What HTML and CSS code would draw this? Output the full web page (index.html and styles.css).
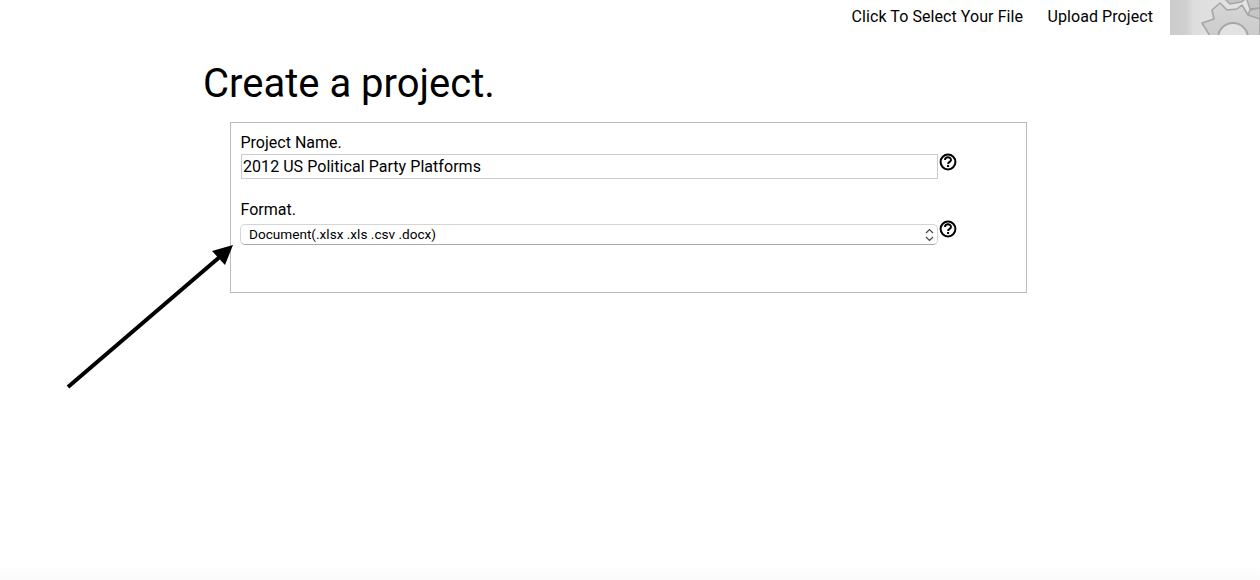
FILE: index.html
```html
<!DOCTYPE html>
<html lang="en">
<head>
    <meta charset="UTF-8">
    <title>Create a project</title>
    <link rel="stylesheet" href="styles.css">
</head>
<body>
    <div class="topbar">
        <a class="nav-link" href="#">Click To Select Your File</a>
        <a class="nav-link" href="#">Upload Project</a>
        <div class="gear-box">
            <svg width="90" height="35" viewBox="0 0 90 35">
                <defs>
                    <linearGradient id="wash" x1="0" y1="0" x2="1" y2="0">
                        <stop offset="0" stop-color="#cbcbcb"></stop>
                        <stop offset="0.18" stop-color="#cfcfcf"></stop>
                        <stop offset="0.26" stop-color="#dedede"></stop>
                        <stop offset="1" stop-color="#e4e4e4"></stop>
                    </linearGradient>
                    <linearGradient id="gearFill" x1="0" y1="0" x2="0" y2="1">
                        <stop offset="0" stop-color="#d6d6d6"></stop>
                        <stop offset="1" stop-color="#cbcbcb"></stop>
                    </linearGradient>
                </defs>
                <rect width="90" height="35" fill="url(#wash)"></rect>
                <!-- back gear, cut off by the top edge -->
                <path d="M56 0 L60 4 L71 2 L77 -2 L77 0 L80 9 L90 8 L90 -2 L56 -2 Z" fill="#c6c6c6" stroke="#a6a6a6" stroke-width="1.5"></path>
                <path d="M78 15 L80 10 L90 8 L90 20 Z" fill="#c6c6c6" stroke="#a6a6a6" stroke-width="1.5"></path>
                <!-- main gear -->
                <path d="M40 36 L32 23 L44 19 L42 10 L50 3 L57 10 L67 9 L72 5 L78 15 L90 19 L90 36 Z" fill="url(#gearFill)" stroke="#a6a6a6" stroke-width="1.6" stroke-linejoin="round"></path>
                <circle cx="63" cy="38" r="15" fill="#e2e2e2" stroke="#a6a6a6" stroke-width="2"></circle>
            </svg>
        </div>
    </div>

    <div class="page">
        <h1 class="title">Create a project.</h1>
        <div class="panel">
            <label class="field-label" for="projectName">Project Name.</label>
            <div class="field-row">
                <input id="projectName" class="text-input" type="text" value="2012 US Political Party Platforms">
                <svg class="help-icon" width="18" height="18" viewBox="0 0 18 18">
                    <circle cx="9" cy="9" r="7.4" fill="none" stroke="#000" stroke-width="2"></circle>
                    <path d="M6 7 C6 3.4 12 3.4 12 6.9 C12 9 9.1 8.8 9.1 11" fill="none" stroke="#000" stroke-width="1.9"></path>
                    <rect x="8.1" y="12" width="2" height="2"></rect>
                </svg>
            </div>
            <label class="field-label format-label" for="format">Format.</label>
            <div class="field-row">
                <div id="format" class="select-box">
                    <span class="select-text">Document(.xlsx .xls .csv .docx)</span>
                    <svg width="9" height="14" viewBox="0 0 9 14">
                        <path d="M1 5 L4.5 1.5 L8 5 M1 9 L4.5 12.5 L8 9" fill="none" stroke="#444" stroke-width="1.2"></path>
                    </svg>
                </div>
                <svg class="help-icon" width="18" height="18" viewBox="0 0 18 18">
                    <circle cx="9" cy="9" r="7.4" fill="none" stroke="#000" stroke-width="2"></circle>
                    <path d="M6 7 C6 3.4 12 3.4 12 6.9 C12 9 9.1 8.8 9.1 11" fill="none" stroke="#000" stroke-width="1.9"></path>
                    <rect x="8.1" y="12" width="2" height="2"></rect>
                </svg>
            </div>
        </div>
    </div>

    <!-- annotation arrow drawn over the page -->
    <svg class="arrow" width="180" height="150" viewBox="60 240 180 150">
        <line x1="68" y1="387" x2="222" y2="255" stroke="#000" stroke-width="4"></line>
        <polygon points="233,245 225,265 212,251" fill="#000"></polygon>
    </svg>
</body>
</html>
```

FILE: styles.css
```css
html, body {
    height: 100%;
}
body {
    margin: 0;
    background: linear-gradient(to bottom, #fff 565px, #fafafa 580px);
    font-family: Roboto, sans-serif;
    color: #000;
    overflow: hidden;
}
.topbar {
    display: flex;
    justify-content: flex-end;
    align-items: center;
    height: 33px;
    padding-bottom: 2px;
}
.nav-link {
    color: #000;
    text-decoration: none;
    font-size: 16px;
    letter-spacing: 0.07px;
    margin-right: 24.5px;
}
.nav-link:nth-child(2) {
    margin-right: 17px;
}
.gear-box {
    width: 90px;
    height: 35px;
    margin-bottom: -2px;
}
.gear-box svg {
    display: block;
}
.page {
    padding-left: 203px;
}
.title {
    margin: 24px 0 0;
    font-size: 40px;
    font-weight: 400;
    line-height: 50px;
}
.panel {
    box-sizing: border-box;
    width: 797px;
    height: 171px;
    margin: 13px 0 0 27px;
    padding: 10px 10px 0 9.5px;
    border: 1px solid #bbb;
}
.field-label {
    display: block;
    font-size: 16px;
    line-height: 20px;
}
.format-label {
    margin-top: 21px;
}
.field-row {
    display: flex;
    align-items: flex-start;
    margin-top: 1px;
}
.text-input {
    box-sizing: border-box;
    width: 697px;
    height: 25px;
    margin-left: 0.5px;
    padding: 0 1px;
    border: 1px solid #ccc;
    font-family: Roboto, sans-serif;
    font-size: 16px;
    letter-spacing: 0.05px;
    color: #000;
    outline: none;
}
.select-box {
    box-sizing: border-box;
    display: flex;
    justify-content: space-between;
    align-items: center;
    width: 698px;
    height: 21px;
    margin: 3px 0 0 -0.5px;
    padding: 0 3px 0 8px;
    border: 1px solid #d4d4d4;
    border-bottom-color: #aaa;
    border-radius: 5px;
    font-size: 13.6px;
}
.select-text {
    margin-bottom: 2px;
}
.help-icon {
    margin: -1px 0 0 1px;
    flex: none;
}
.arrow {
    position: absolute;
    left: 60px;
    top: 240px;
}
```
